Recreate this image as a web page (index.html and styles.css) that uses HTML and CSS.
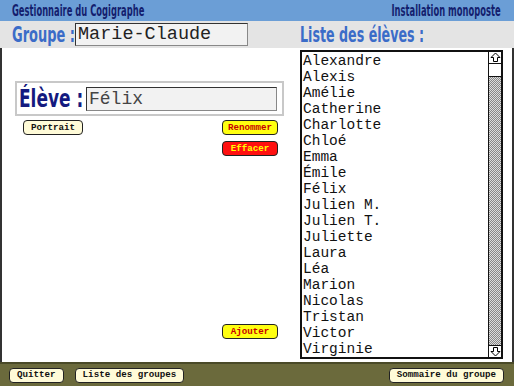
FILE: index.html
```html
<!DOCTYPE html>
<html lang="fr">
<head>
<meta charset="utf-8">
<title>Gestionnaire du Cogigraphe</title>
<link rel="stylesheet" href="styles.css">
</head>
<body>
<div class="app">
  <div class="header">
    <span class="hbox"><span class="htext">Gestionnaire du Cogigraphe</span></span>
    <span class="hbox right-box"><span class="htext right-text">Installation monoposte</span></span>
  </div>
  <div class="band">
    <div class="band-left">
      <span class="label-box"><span class="label">Groupe :</span></span>
      <div class="field group-field">Marie-Claude</div>
    </div>
    <div class="band-right"><span class="label-box wide"><span class="label">Liste des élèves :</span></span></div>
  </div>
  <div class="content">
    <div class="left">
      <div class="eleve-box">
        <span class="eleve-box-label"><span class="eleve-label">Élève :</span></span>
        <div class="field eleve-field">Félix</div>
      </div>
      <div class="btn-row">
        <button class="btn cream">Portrait</button>
        <button class="btn yellow">Renommer</button>
      </div>
      <div class="btn-row end">
        <button class="btn red">Effacer</button>
      </div>
      <div class="btn-row end bottom">
        <button class="btn yellow">Ajouter</button>
      </div>
    </div>
    <div class="right">
      <div class="list">
        <ul class="items">
          <li>Alexandre</li>
          <li>Alexis</li>
          <li>Amélie</li>
          <li>Catherine</li>
          <li>Charlotte</li>
          <li>Chloé</li>
          <li>Emma</li>
          <li>Émile</li>
          <li>Félix</li>
          <li>Julien M.</li>
          <li>Julien T.</li>
          <li>Juliette</li>
          <li>Laura</li>
          <li>Léa</li>
          <li>Marion</li>
          <li>Nicolas</li>
          <li>Tristan</li>
          <li>Victor</li>
          <li>Virginie</li>
        </ul>
        <div class="scrollbar">
          <div class="arrow">
            <svg width="11" height="11" viewBox="0 0 11 11"><path d="M5.5 1 L10 5.5 L7.5 5.5 L7.5 9.5 L3.5 9.5 L3.5 5.5 L1 5.5 Z" fill="#fff" stroke="#000" stroke-width="1"/></svg>
          </div>
          <div class="thumb"></div>
          <div class="track"></div>
          <div class="arrow">
            <svg width="11" height="11" viewBox="0 0 11 11"><path d="M5.5 10 L10 5.5 L7.5 5.5 L7.5 1.5 L3.5 1.5 L3.5 5.5 L1 5.5 Z" fill="#fff" stroke="#000" stroke-width="1"/></svg>
          </div>
        </div>
      </div>
    </div>
  </div>
  <div class="footer">
    <div class="footer-left">
      <button class="btn cream">Quitter</button>
      <button class="btn cream">Liste des groupes</button>
    </div>
    <button class="btn cream">Sommaire du groupe</button>
  </div>
</div>
</body>
</html>
```

FILE: styles.css
```css
* { box-sizing: border-box; }
html, body { margin: 0; padding: 0; }
body { width: 514px; height: 386px; overflow: hidden; background: #fff; }
.app { width: 514px; height: 386px; display: flex; flex-direction: column; }

.header {
  height: 21px;
  background: #6b9ed6;
  display: flex;
  justify-content: space-between;
  align-items: center;
  padding: 0 13px 0 12px;
  font-family: "DejaVu Sans", sans-serif;
  font-weight: bold;
  font-size: 15px;
  color: #141e6e;
}
.hbox { width: 151px; white-space: nowrap; display: flex; }
.right-box { width: 123px; justify-content: flex-end; }
.htext { display: inline-block; flex-shrink: 0; transform: scaleX(0.558); transform-origin: left center; }
.right-text { transform-origin: right center; }

.band {
  height: 27px;
  background: #e4e4e4;
  display: flex;
  align-items: center;
}
.band-left { width: 300px; display: flex; align-items: center; padding-left: 12px; gap: 5px; }
.band-right { flex: 1; }
.label-box { display: block; width: 58px; white-space: nowrap; }
.label-box.wide { width: 124px; }
.label {
  display: inline-block;
  font-family: "DejaVu Sans", sans-serif;
  font-weight: bold;
  font-size: 20.5px;
  color: #3b6cc8;
  transform: scaleX(0.633);
  transform-origin: left center;
}
.wide .label { transform: scaleX(0.618); }

.field {
  background: #f2f2f2;
  border: 1px solid #333;
  border-right-color: #888;
  border-bottom-color: #888;
  font-family: "Liberation Mono", monospace;
  color: #222;
}
.group-field { width: 173px; height: 23px; font-size: 18.5px; line-height: 21px; padding-left: 2px; }

.content { flex: 1; display: flex; border-left: 2px solid #333; border-right: 2px solid #333; }
.left { width: 298px; display: flex; flex-direction: column; padding: 33px 0 23px 13px; }
.eleve-box {
  width: 269px;
  height: 35px;
  border: 2px solid #c8c8c8;
  display: flex;
  align-items: center;
  padding-left: 2px;
  gap: 5px;
}
.eleve-box-label { display: block; width: 62px; white-space: nowrap; }
.eleve-label {
  display: inline-block;
  font-family: "DejaVu Sans", sans-serif;
  font-weight: bold;
  font-size: 25px;
  color: #141a80;
  transform: scaleX(0.68);
  transform-origin: left center;
}
.eleve-field { width: 191px; height: 24px; font-size: 18px; line-height: 22px; padding-left: 2px; color: #444; }

.btn-row { display: flex; justify-content: space-between; padding: 0 6px 0 8px; margin-top: 4px; width: 269px; }
.btn-row.end { justify-content: flex-end; margin-top: 6px; }
.btn-row.bottom { margin-top: auto; }

.btn {
  height: 15px;
  padding: 0 7px;
  border: 1px solid #222;
  border-radius: 4px;
  font-family: "Liberation Mono", monospace;
  font-weight: bold;
  font-size: 9.2px;
  line-height: 12px;
  cursor: pointer;
}
.cream { background: #fffbd8; color: #111; }
.yellow { background: #ffff10; color: #c80000; width: 56px; padding: 0; }
.red { background: #ff1010; color: #ffff00; width: 56px; padding: 0; }

.right { flex: 1; padding: 2px 9px 3px 0; }
.list {
  height: 100%;
  border: 2px solid #111;
  display: flex;
  background: #fff;
}
.items {
  flex: 1;
  list-style: none;
  margin: 0;
  padding: 1px 0 0 1px;
  font-family: "Liberation Mono", monospace;
  font-size: 14.5px;
  line-height: 16px;
  color: #111;
}
.scrollbar {
  width: 13px;
  border-left: 1px solid #111;
  display: flex;
  flex-direction: column;
}
.arrow { height: 12px; display: flex; align-items: center; justify-content: center; background: #fff; }
.arrow:first-child { border-bottom: 1px solid #111; }
.arrow:last-child { border-top: 1px solid #111; }
.thumb { height: 13px; background: #fff; border-bottom: 1px solid #111; }
.track {
  flex: 1;
  background-color: #fff;
  background-image: repeating-conic-gradient(#888 0 25%, #ddd 0 50%);
  background-size: 2px 2px;
}

.footer {
  height: 24px;
  background: #6b6a3c;
  border-top: 2px solid #4a4a28;
  display: flex;
  justify-content: space-between;
  align-items: center;
  padding: 0 10px 0 9px;
}
.footer-left { display: flex; gap: 11px; }
.footer .btn { padding: 0 7px; }
```
